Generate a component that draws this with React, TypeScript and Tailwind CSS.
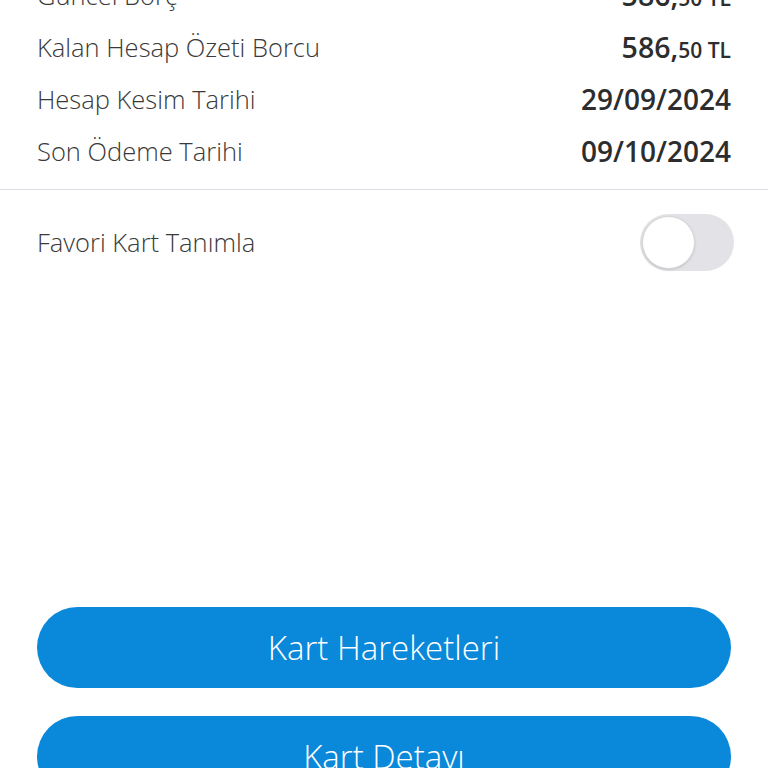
import { useState } from 'react'

const rows = [
  { label: 'Güncel Borç', whole: '586,', frac: '50 TL' },
  { label: 'Kalan Hesap Özeti Borcu', whole: '586,', frac: '50 TL' },
  { label: 'Hesap Kesim Tarihi', date: '29/09/2024' },
  { label: 'Son Ödeme Tarihi', date: '09/10/2024' },
]

export default function App() {
  const [fav, setFav] = useState(false)

  return (
    <div
      className="h-[768px] w-[768px] overflow-hidden bg-white text-[#333333]"
      style={{ fontFamily: '"Open Sans", "Noto Sans", sans-serif' }}
    >
      {/* Summary rows (scrolled so first one is cut off) */}
      <div className="-mt-[31px] px-[37px] pb-[12px]">
        {rows.map((r) => (
          <div key={r.label} className="flex h-[52px] items-center justify-between">
            <span className="text-[25.5px] font-light text-[#3a3a3a]">{r.label}</span>
            {r.date ? (
              <span className="text-[28px] font-semibold text-[#2d2d2d]">{r.date}</span>
            ) : (
              <span className="font-semibold text-[#2d2d2d]">
                <span className="text-[28.5px]">{r.whole}</span>
                <span className="text-[21px]">{r.frac}</span>
              </span>
            )}
          </div>
        ))}
      </div>

      <div className="h-px bg-[#d9dee7]" />

      {/* Favourite toggle */}
      <div className="flex h-[104px] items-center justify-between pl-[37px] pr-[34px]">
        <span className="text-[25.5px] font-light text-[#3a3a3a]">Favori Kart Tanımla</span>
        <button
          onClick={() => setFav(!fav)}
          className={`flex h-[57px] w-[94px] items-center rounded-full p-[2px] ${fav ? 'justify-end bg-[#0a88d9]' : 'justify-start bg-[#e3e3e7]'}`}
        >
          <span className="h-[53px] w-[53px] rounded-full border border-[#d6d6da] bg-white shadow-sm" />
        </button>
      </div>

      {/* Actions */}
      <div className="mt-[313px] flex flex-col gap-[28px] px-[37px]">
        <button className="h-[81px] rounded-full bg-[#0a88d9] text-[33px] font-light text-white">
          Kart Hareketleri
        </button>
        <button className="h-[81px] rounded-full bg-[#0a88d9] text-[33px] font-light text-white">
          Kart Detayı
        </button>
      </div>
    </div>
  )
}
